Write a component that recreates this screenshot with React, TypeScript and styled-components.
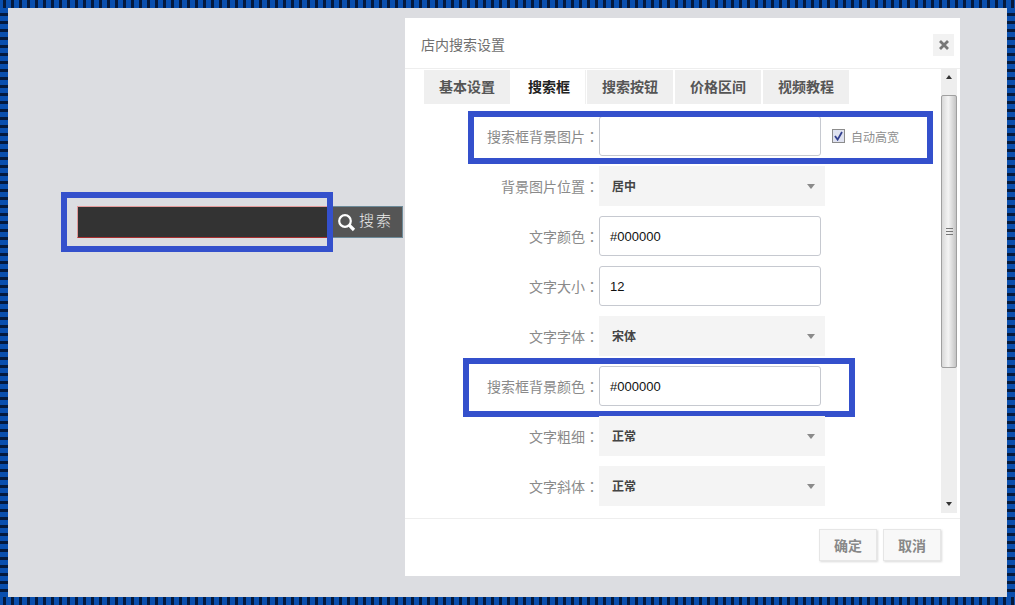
import styled, { createGlobalStyle } from "styled-components";

const GlobalStyle = createGlobalStyle`
  html, body {
    margin: 0;
    padding: 0;
    background: #dcdde1;
    font-family: "Liberation Sans", "Noto Sans CJK SC", sans-serif;
  }
`;

const TABS = ["基本设置", "搜索框", "搜索按钮", "价格区间", "视频教程"];

type Field = {
  label: string;
  kind: "input" | "select";
  value: string;
};

const FIELDS: Field[] = [
  { label: "搜索框背景图片", kind: "input", value: "" },
  { label: "背景图片位置", kind: "select", value: "居中" },
  { label: "文字颜色", kind: "input", value: "#000000" },
  { label: "文字大小", kind: "input", value: "12" },
  { label: "文字字体", kind: "select", value: "宋体" },
  { label: "搜索框背景颜色", kind: "input", value: "#000000" },
  { label: "文字粗细", kind: "select", value: "正常" },
  { label: "文字斜体", kind: "select", value: "正常" },
];

export default function App() {
  return (
    <>
      <GlobalStyle />
      <Frame>
        <Preview>
          <SearchBox>
            <PreviewInput />
            <PreviewMark />
            <SearchButton>
              <svg width="19" height="19" viewBox="0 0 19 19" fill="none" stroke="#fff">
                <circle cx="8" cy="8" r="5.8" strokeWidth="2.2" />
                <path d="M12.2 12.2 L17 17" strokeWidth="3.2" />
              </svg>
              <SearchText>搜索</SearchText>
            </SearchButton>
          </SearchBox>
        </Preview>
        <Modal>
          <Header>
            <Title>店内搜索设置</Title>
            <CloseButton>
              <svg width="10" height="10" viewBox="0 0 10 10" stroke="#777" strokeWidth="2.8">
                <path d="M1 1 L9 9 M9 1 L1 9" />
              </svg>
            </CloseButton>
          </Header>
          <Body>
            <Content>
              <Tabs>
                {TABS.map((tab, i) => (
                  <Tab key={tab} $active={i === 1}>
                    {tab}
                  </Tab>
                ))}
              </Tabs>
              <Form>
                {FIELDS.map((field, i) => (
                  <Row key={i}>
                    <Label>
                      {field.label}
                      <Colon>：</Colon>
                    </Label>
                    {field.kind === "input" ? (
                      <TextInput>{field.value}</TextInput>
                    ) : (
                      <SelectBox>
                        {field.value}
                        <Caret />
                      </SelectBox>
                    )}
                    {i === 0 && (
                      <AutoSize>
                        <CheckBox>
                          <svg width="9" height="10" viewBox="0 0 9 10" fill="none" stroke="#33408f" strokeWidth="1.8">
                            <path d="M1 5 L3.6 8.6 L8 1" />
                          </svg>
                        </CheckBox>
                        自动高宽
                      </AutoSize>
                    )}
                    {i === 0 && <ImageMark />}
                    {i === 5 && <ColorMark />}
                  </Row>
                ))}
              </Form>
            </Content>
            <ScrollBar>
              <ScrollTop>
                <ArrowUp />
              </ScrollTop>
              <ScrollThumb>
                <Grip />
              </ScrollThumb>
              <ScrollBottom>
                <ArrowDown />
              </ScrollBottom>
            </ScrollBar>
          </Body>
          <Footer>
            <FooterButton>确定</FooterButton>
            <FooterButton>取消</FooterButton>
          </Footer>
        </Modal>
      </Frame>
    </>
  );
}

const Frame = styled.div`
  box-sizing: border-box;
  width: 1015px;
  height: 605px;
  padding: 18px 55px 29px 8px;
  display: flex;
  background-color: #dcdde1;
  background-image:
    repeating-linear-gradient(90deg, #0a4fae 0 3px, #061a3c 3px 6px, #0a4fae 6px 8px),
    repeating-linear-gradient(90deg, #0a4fae 0 3px, #061a3c 3px 6px, #0a4fae 6px 8px),
    repeating-linear-gradient(180deg, #0a4fae 0 5px, #061a3c 5px 8px),
    repeating-linear-gradient(180deg, #0a4fae 0 5px, #061a3c 5px 8px);
  background-size: 100% 8px, 100% 8px, 8px 100%, 8px 100%;
  background-position: top left, bottom left, top left, top right;
  background-repeat: no-repeat;
`;

const Preview = styled.div`
  box-sizing: border-box;
  width: 397px;
  flex: none;
  padding: 188px 0 0 69px;
`;

const SearchBox = styled.div`
  position: relative;
  display: flex;
  gap: 6px;
  height: 32px;
`;

const PreviewInput = styled.div`
  box-sizing: border-box;
  width: 250px;
  height: 32px;
  background: #333;
  border: 1px solid #e39a9a;
  border-bottom-color: #a83030;
  border-right: none;
`;

const PreviewMark = styled.div`
  position: absolute;
  left: -16px;
  top: -14px;
  width: 272px;
  height: 60px;
  box-sizing: border-box;
  border: 6px solid #3450cc;
`;

const SearchButton = styled.div`
  box-sizing: border-box;
  width: 70px;
  height: 32px;
  display: flex;
  align-items: center;
  gap: 3px;
  padding-left: 4px;
  background: #555;
  border: 1px solid #6d8a99;
  border-left: none;
  color: #eee;
  font-size: 15px;
  letter-spacing: 2px;
`;

const SearchText = styled.span`
  padding-bottom: 5px;
  font-weight: 300;
`;

const Modal = styled.div`
  width: 555px;
  height: 558px;
  flex: none;
  display: flex;
  flex-direction: column;
  background: #fff;
`;

const Header = styled.div`
  box-sizing: border-box;
  height: 51px;
  flex: none;
  padding: 16px 6px 0 16px;
  display: flex;
  align-items: flex-start;
  justify-content: space-between;
  border-bottom: 1px solid #eeeeee;
`;

const Title = styled.div`
  font-size: 14px;
  line-height: 22px;
  color: #6f6f6f;
`;

const CloseButton = styled.div`
  width: 21px;
  height: 22px;
  background: #f2f2f2;
  display: flex;
  align-items: center;
  justify-content: center;
`;

const Body = styled.div`
  height: 444px;
  flex: none;
  display: flex;
`;

const Content = styled.div`
  width: 536px;
  flex: none;
`;

const Tabs = styled.div`
  display: flex;
  gap: 2px;
  height: 34px;
  margin-top: 1px;
  padding-left: 19px;
`;

const Tab = styled.div<{ $active?: boolean }>`
  box-sizing: border-box;
  padding: 0 15px 2px;
  margin-left: ${(p) => (p.$active ? "1px" : "0")};
  display: flex;
  align-items: center;
  font-size: 14px;
  font-weight: 700;
  color: ${(p) => (p.$active ? "#222" : "#555")};
  background: ${(p) => (p.$active ? "#fff" : "#efefef")};
  box-shadow: ${(p) => (p.$active ? "1px 0 0 #f0f0f0" : "none")};
`;

const Form = styled.div`
  display: flex;
  flex-direction: column;
  gap: 10px;
  margin-top: 12px;
`;

const Row = styled.div`
  position: relative;
  display: flex;
  align-items: center;
  height: 40px;
`;

const Label = styled.div`
  box-sizing: border-box;
  width: 194px;
  flex: none;
  padding-bottom: 1px;
  display: flex;
  justify-content: flex-end;
  font-size: 14px;
  color: #8a8a8a;
`;

const Colon = styled.span`
  font-family: "Noto Sans CJK TC", sans-serif;
`;

const TextInput = styled.div`
  box-sizing: border-box;
  width: 222px;
  height: 40px;
  flex: none;
  padding-left: 10px;
  display: flex;
  align-items: center;
  font-size: 13px;
  color: #111;
  border: 1px solid #c6c9d0;
  border-radius: 3px;
`;

const SelectBox = styled.div`
  position: relative;
  box-sizing: border-box;
  width: 226px;
  height: 40px;
  flex: none;
  padding: 0 0 2px 13px;
  display: flex;
  align-items: center;
  font-size: 12px;
  font-weight: 700;
  color: #444;
  background: #f4f4f4;
`;

const Caret = styled.span`
  position: absolute;
  right: 10px;
  top: 18px;
  border-style: solid;
  border-width: 5px 4px 0;
  border-color: #8a8a8a transparent transparent;
`;

const AutoSize = styled.label`
  display: flex;
  align-items: center;
  gap: 6px;
  margin-left: 11px;
  font-size: 12px;
  color: #8f8f8f;
`;

const CheckBox = styled.span`
  box-sizing: border-box;
  width: 13px;
  height: 14px;
  display: flex;
  align-items: center;
  justify-content: center;
  background: #dfe2f0;
  border: 1px solid #8c8c8c;
`;

const ImageMark = styled.div`
  position: absolute;
  left: 63px;
  top: -5px;
  width: 465px;
  height: 53px;
  box-sizing: border-box;
  border: 6px solid #3450cc;
`;

const ColorMark = styled.div`
  position: absolute;
  left: 58px;
  top: -8px;
  width: 392px;
  height: 59px;
  box-sizing: border-box;
  border: 6px solid #3450cc;
`;

const ScrollBar = styled.div`
  width: 16px;
  flex: none;
  display: flex;
  flex-direction: column;
  background: #eeeeee;
`;

const ScrollTop = styled.div`
  height: 26px;
  flex: none;
  padding-top: 6px;
  box-sizing: border-box;
  display: flex;
  justify-content: center;
`;

const ScrollBottom = styled.div`
  flex: 1;
  padding-bottom: 7px;
  display: flex;
  align-items: flex-end;
  justify-content: center;
`;

const ArrowUp = styled.span`
  align-self: flex-start;
  border-style: solid;
  border-width: 0 3.5px 4px;
  border-color: transparent transparent #333;
`;

const ArrowDown = styled.span`
  border-style: solid;
  border-width: 4px 3.5px 0;
  border-color: #333 transparent transparent;
`;

const ScrollThumb = styled.div`
  box-sizing: border-box;
  height: 273px;
  flex: none;
  display: flex;
  align-items: center;
  justify-content: center;
  background: linear-gradient(90deg, #d8d8d8, #f4f4f4 45%, #c4c4c4);
  border: 1px solid #a0a0a0;
  border-radius: 2px;
`;

const Grip = styled.span`
  width: 7px;
  height: 7px;
  background: repeating-linear-gradient(180deg, #777 0 1px, transparent 1px 3px);
`;

const Footer = styled.div`
  box-sizing: border-box;
  flex: none;
  height: 58px;
  margin-top: 5px;
  padding: 10px 19px 0 0;
  display: flex;
  justify-content: flex-end;
  align-items: flex-start;
  gap: 6px;
  border-top: 1px solid #eeeeee;
`;

const FooterButton = styled.div`
  box-sizing: border-box;
  width: 58px;
  height: 32px;
  display: flex;
  align-items: center;
  justify-content: center;
  font-size: 14px;
  font-weight: 700;
  color: #888;
  background: #f8f8f8;
  border: 1px solid #e6e6e6;
  box-shadow: 1px 1px 2px rgba(0, 0, 0, 0.15);
`;
